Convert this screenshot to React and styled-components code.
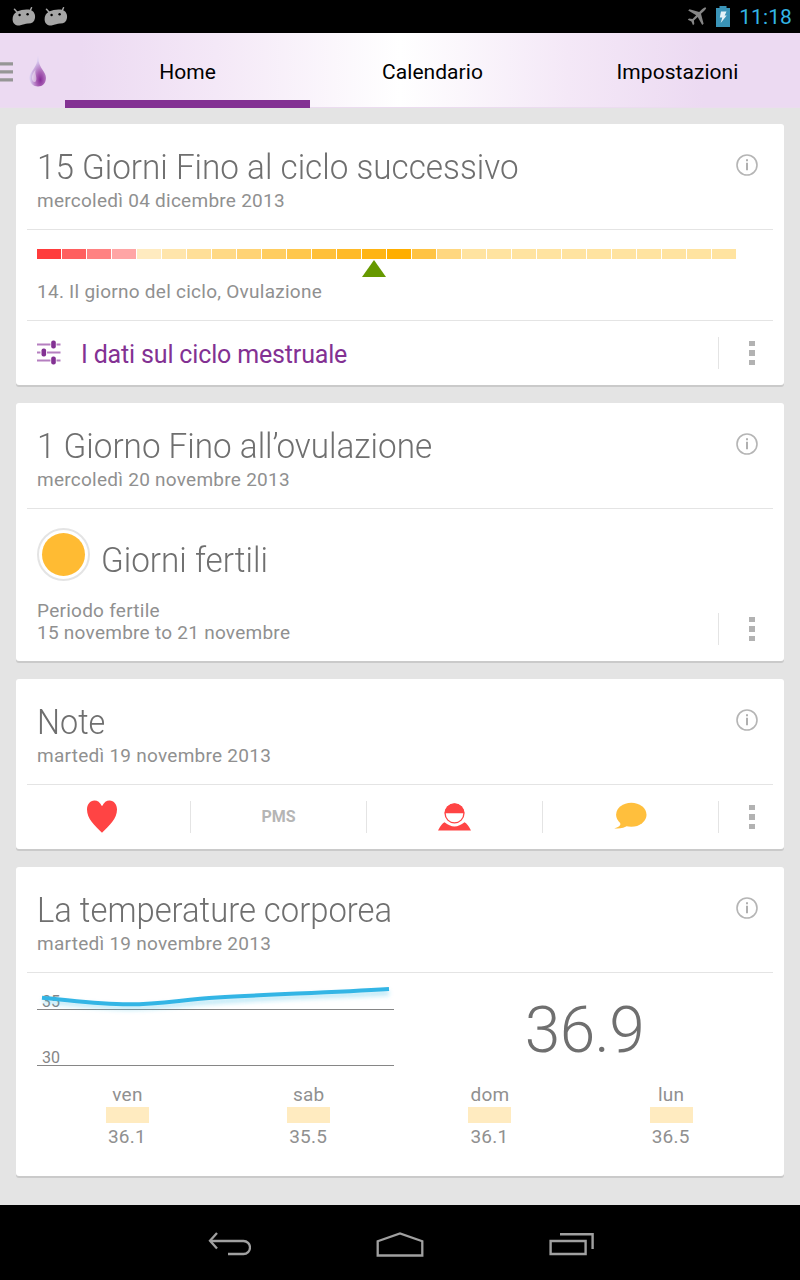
import React from "react";
import styled, { createGlobalStyle } from "styled-components";

const GlobalStyle = createGlobalStyle`
  body {
    margin: 0;
    background: #e4e4e4;
    font-family: Roboto, "Liberation Sans", sans-serif;
  }

  * {
    box-sizing: border-box;
  }

  svg {
    display: block;
    flex-shrink: 0;
  }
`;

const Screen = styled.div`
  width: 800px;
  height: 1280px;
  display: flex;
  flex-direction: column;
  overflow: hidden;
`;

/* System bars */

const StatusBar = styled.div`
  height: 33px;
  flex-shrink: 0;
  background: #000;
  display: flex;
  align-items: center;
  justify-content: space-between;
  padding: 0 8px 0 12px;
`;

const StatusGroup = styled.div`
  display: flex;
  align-items: center;
  gap: ${(props) => props.$gap}px;
`;

const Clock = styled.span`
  color: #33b5e5;
  font-size: 21px;
  line-height: 33px;
  padding-top: 2px;
  letter-spacing: 0.1px;
`;

const NavBar = styled.nav`
  height: 75px;
  flex-shrink: 0;
  background: #000;
  display: flex;
  justify-content: center;
  align-items: center;
  gap: 125px;
  padding: 3px 0 0 2px;
`;

/* Header */

const Header = styled.header`
  height: 75px;
  flex-shrink: 0;
  display: flex;
  background: linear-gradient(90deg, #ecdaf2 0%, #ecdaf2 10%, #f4e8f7 27%, #fff 50%, #f4e8f7 71%, #ecdaf2 88%, #ecdaf2 100%);
  box-shadow: inset 0 -1px #ecdcf0;
`;

const Brand = styled.div`
  width: 65px;
  display: flex;
  align-items: center;
  gap: 16px;
  padding-top: 2px;
`;

const Tab = styled.div`
  width: 245px;
  height: 75px;
  padding-top: 7px;
  border-bottom: 8px solid ${(props) => (props.$active ? "#833193" : "transparent")};
  text-align: center;
  font-size: 21px;
  line-height: 64px;
  letter-spacing: 0.05px;
  color: #000;
`;

/* Cards */

const Cards = styled.main`
  flex: 1;
  display: flex;
  flex-direction: column;
  gap: 18px;
  padding: 16px;
`;

const Card = styled.section`
  height: ${(props) => props.$height}px;
  flex-shrink: 0;
  padding: 0 11px;
  background: #fff;
  border-radius: 3px;
  box-shadow: 0 2px #cacaca;
`;

const CardHeader = styled.div`
  height: 106px;
  padding: 24px 15px 0 10px;
  display: flex;
  justify-content: space-between;
  border-bottom: 1px solid #e4e4e4;

  svg {
    margin-top: 6px;
  }
`;

/* slightly condensed light face */
const Title = styled.h2`
  margin: 0;
  font-size: 35px;
  font-weight: 300;
  line-height: 40px;
  color: #6f6f6f;
  white-space: nowrap;
  transform: scaleX(${(props) => props.$stretch || 0.95});
  transform-origin: left;
`;

const Text = styled.div`
  font-size: 19px;
  line-height: 22px;
  letter-spacing: 0.26px;
  color: #909090;
  white-space: nowrap;
`;

const Subtitle = styled(Text)`
  margin-top: 2px;
`;

const CycleBody = styled.div`
  height: 91px;
  padding: 19px 10px 0;
  border-bottom: 1px solid #e4e4e4;
`;

const CycleBar = styled.div`
  display: flex;
  gap: 1px;
`;

const CycleDay = styled.div`
  width: 24px;
  height: 10px;
  background: ${(props) => props.$color};
`;

const Marker = styled.div`
  width: 24px;
  height: 17px;
  margin: 1px 0 4px 325px;
  background: #669900;
  clip-path: polygon(50% 0, 100% 100%, 0 100%);
`;

const ActionRow = styled.div`
  height: 64px;
  display: flex;
  align-items: center;
`;

const Action = styled.div`
  flex: 1;
  display: flex;
  align-items: center;
  gap: 20px;
  padding: 2px 0 0 10px;
  font-size: 25px;
  letter-spacing: -0.16px;
  color: #833193;

  svg {
    margin-bottom: 4px;
  }
`;

const More = styled.div`
  width: 55px;
  height: 32px;
  flex-shrink: 0;
  display: flex;
  flex-direction: column;
  justify-content: center;
  gap: 4px;
  padding-left: 30px;
  border-left: 1px solid #e4e4e4;
`;

const Dot = styled.span`
  width: 5.5px;
  height: 5.5px;
  background: #b2b2b2;
`;

const FertileBody = styled.div`
  height: 152px;
  padding: 19px 0 0 10px;
`;

const FertileRow = styled.div`
  display: flex;
  gap: 11px;

  ${Title} {
    margin-top: 13px;
  }
`;

const Ring = styled.div`
  width: 53px;
  height: 53px;
  border: 2px solid #e4e4e4;
  border-radius: 50%;
  padding: 3px;

  &::after {
    content: "";
    display: block;
    width: 43px;
    height: 43px;
    border-radius: 50%;
    background: #ffbb33;
  }
`;

const FertileFooter = styled.div`
  display: flex;
  justify-content: space-between;
  align-items: flex-end;
  margin-top: 19px;

  ${More} {
    margin-bottom: -1px;
  }
`;

const NoteRow = styled.div`
  height: 64px;
  display: flex;
  align-items: center;
`;

const NoteCell = styled.div`
  width: ${(props) => (props.$first ? 163 : 176)}px;
  height: 32px;
  display: flex;
  align-items: center;
  justify-content: center;
  padding-right: ${(props) => (props.$first ? 14 : 0)}px;
  padding-bottom: ${(props) => props.$lift || 0}px;
  border-left: ${(props) => (props.$first ? "none" : "1px solid #e4e4e4")};
  font-size: 16px;
  font-weight: 700;
  color: #b5b5b5;
`;

const TemperatureRow = styled.div`
  display: flex;
  padding-left: 10px;
`;

const Chart = styled.svg`
  width: 357px;
  height: 110px;
`;

const Current = styled.div`
  width: 381px;
  flex-shrink: 0;
  padding-top: 20px;
  text-align: center;
  font-size: 64px;
  font-weight: 300;
  line-height: 76px;
  letter-spacing: -0.6px;
  color: #6f6f6f;
`;

const Days = styled.div`
  display: grid;
  grid-template-columns: repeat(4, 181.25px);
  padding-left: 9.8px;
`;

const Day = styled.div`
  display: flex;
  flex-direction: column;
  align-items: center;
`;

const DayName = styled(Text)`
  padding-top: 1px;
`;

const DayValue = styled(Text)`
  padding-right: 1px;
`;

const Swatch = styled.div`
  width: 43px;
  height: 16px;
  margin: 1px 0 3px;
  background: #ffebc0;
`;

/* Icons */

const Bean = () => (
  <svg width="24" height="20" viewBox="0 0 24 20" fill="#a6a6a6">
    <path d="M5.2 4.600C9 2.600 14.500 2 18.500 2.900C22 4 23.600 7.500 23 11C22.400 14.800 20 16.600 16 16.500C13 16.500 11.500 17.700 7.500 18.500C4 18.800 .8 17 .6 12.500C.5 9 2 6.300 5.200 4.600Z" />
    <path d="M5.200 5.200L2.500 2.300M18.200 3.600L19.500.8" stroke="#a6a6a6" strokeWidth="1.500" strokeLinecap="round" />
    <circle cx="7.600" cy="8" r="1.200" fill="#000" />
    <circle cx="15.600" cy="7.200" r="1.200" fill="#000" />
  </svg>
);

const Plane = () => (
  <svg width="20" height="19" viewBox="0 0 20 19" fill="#858585">
    <path d="M19 .7C18.400 0 16.500.8 15.300 2L12.200 5L2.500 2.300L1.200 3.600L9.200 8.200L5.500 12L2 11.500L.8 12.700L4.400 14.500L6 18.200L7.300 17L6.900 13.500L10.700 9.900L15.200 18L16.600 16.700L14 6.800L17.300 3.700C18.500 2.500 19.500 1.300 19 .7Z" />
  </svg>
);

const Battery = () => (
  <svg width="14" height="21" viewBox="0 0 14 21">
    <path d="M3.500 0H10.500V2H14V21H0V2H3.500Z" fill="#3a94b8" />
    <path d="M5 5.500H10.500L8.700 9.500H10.700L4.700 17L6.300 11.500H3.800Z" fill="#e3f2f8" />
  </svg>
);

const Menu = () => (
  <svg width="13" height="20" viewBox="0 0 13 20" fill="#969696">
    <path d="M0 .3H13V3.600H0ZM0 8.300H13V11.600H0ZM0 16.300H13V19.600H0Z" />
  </svg>
);

const Drop = () => (
  <svg width="18" height="34" viewBox="0 0 18 34">
    <defs>
      <radialGradient id="drop" cx="0.66" cy="0.78" r="0.62">
        <stop offset="0" stopColor="#862a98" />
        <stop offset="0.4" stopColor="#a962b5" />
        <stop offset="1" stopColor="#d9cdf0" />
      </radialGradient>
    </defs>
    <path d="M9 .5C9.500 7 10.500 10 13 14C15.500 17.500 17 20 17 23C17 28 13.500 31.500 9 31.500S.5 28 .5 23C.5 20 2 17.500 4.500 14C7.300 10 8.500 7 9 .5Z" fill="url(#drop)" />
    <path d="M6.500 14.500C3.500 18.500 2.500 21 3 24C3.500 27 6 28 7 26C8.500 22 5.500 19 6.500 14.500Z" fill="#fff" opacity="0.45" />
  </svg>
);

const Info = () => (
  <svg width="22" height="22" viewBox="0 0 22 22">
    <circle cx="11" cy="11" r="10" fill="none" stroke="#b5b5b5" strokeWidth="1.600" />
    <path d="M10 5.200H12V7.200H10ZM10 8.800H12V16.300H10Z" fill="#b0b0b0" />
  </svg>
);

const Sliders = () => (
  <svg width="24" height="25" viewBox="0 0 24 25">
    <path d="M0 4.500H23.500M0 12.500H23.500M0 20.500H23.500" stroke="#b57fc0" strokeWidth="2" />
    <path d="M13.500 4.500H19.500M3.500 12.500H10M13.500 20.500H19.500" stroke="#fff" strokeWidth="3" />
    <g fill="#833193">
      <rect x="14.200" y="0.500" width="4.600" height="8" rx="2" />
      <rect x="4.500" y="8.500" width="4.600" height="8" rx="2" />
      <rect x="14.200" y="16.500" width="4.600" height="8" rx="2" />
    </g>
  </svg>
);

const Heart = () => (
  <svg width="30" height="33" viewBox="0 0 30 33" fill="#ff4444">
    <path d="M15 6.300C13 2.200 10.500.5 7.500.5C3 .5 0 4.500 0 9.500C0 18.500 7.500 25.500 15 32.700C22.500 25.500 30 18.500 30 9.500C30 4.500 27 .5 22.500.5C19.500.5 17 2.200 15 6.300Z" />
  </svg>
);

const Person = () => (
  <svg width="33" height="28" viewBox="0 0 33 28">
    <circle cx="16.500" cy="10.500" r="9.400" fill="#fff" stroke="#ff4444" strokeWidth="1.300" />
    <path d="M6.500 10.300A10 10 0 0 1 26.500 10.300Z" fill="#ff4444" />
    <path d="M6.500 19.300Q16.500 27.600 26.500 19.300Q29.500 20.500 33 27.500H0Q3.500 20.500 6.500 19.300Z" fill="#ff4444" />
  </svg>
);

const Bubble = () => (
  <svg width="33" height="27" viewBox="0 0 33 27" fill="#ffbf3d">
    <ellipse cx="17.300" cy="12.700" rx="15.200" ry="12" />
    <path d="M4.500 19C8.500 22 6 25 .3 26.200C5 27 11 25.700 13.500 23.500Z" />
  </svg>
);

const Back = () => (
  <svg width="44" height="24" viewBox="0 0 44 24" fill="none" stroke="#a0a0a0" strokeWidth="2.300">
    <path d="M3 9H36.500A6.500 6.500 0 0 1 36.500 22H21" />
    <path d="M10 1L3 8.700L10 16.500" />
  </svg>
);

const Home = () => (
  <svg width="48" height="25" viewBox="0 0 48 25" fill="none" stroke="#a0a0a0" strokeWidth="2.300">
    <path d="M1.700 23.500V9.200L24 1.500L46.300 9.200V23.500Z" />
  </svg>
);

const Recents = () => (
  <svg width="46" height="24" viewBox="0 0 46 24" fill="none" stroke="#a0a0a0" strokeWidth="2.400">
    <path d="M1.600 9H36.600V22H1.600ZM11 2.300H43.600V17" />
  </svg>
);

const cycleColors = [
  "#ff3b3b", "#ff5f5f", "#ff8282", "#ffa5a5", "#ffebc0", "#ffe5ab", "#ffdf98",
  "#ffd985", "#ffd375", "#ffcd60", "#ffc74d", "#ffc03a", "#ffba28", "#ffb413",
  "#ffae00", "#ffc343", "#ffd780",
  ...Array(11).fill("#ffe3a0"),
];

const days = [
  { name: "ven", value: "36.1" },
  { name: "sab", value: "35.5" },
  { name: "dom", value: "36.1" },
  { name: "lun", value: "36.5" },
];

const MoreButton = () => (
  <More>
    <Dot />
    <Dot />
    <Dot />
  </More>
);

const CardTop = ({ title, date, stretch }) => (
  <CardHeader>
    <div>
      <Title $stretch={stretch}>{title}</Title>
      <Subtitle>{date}</Subtitle>
    </div>
    <Info />
  </CardHeader>
);

export default function App() {
  return (
    <Screen>
      <GlobalStyle />

      <StatusBar>
        <StatusGroup $gap={8}>
          <Bean />
          <Bean />
        </StatusGroup>
        <StatusGroup $gap={9}>
          <Plane />
          <Battery />
          <Clock>11:18</Clock>
        </StatusGroup>
      </StatusBar>

      <Header>
        <Brand>
          <Menu />
          <Drop />
        </Brand>
        <Tab $active>Home</Tab>
        <Tab>Calendario</Tab>
        <Tab>Impostazioni</Tab>
      </Header>

      <Cards>
        <Card $height={261}>
          <CardTop title="15 Giorni Fino al ciclo successivo" date="mercoledì 04 dicembre 2013" />
          <CycleBody>
            <CycleBar>
              {cycleColors.map((color, i) => (
                <CycleDay key={i} $color={color} />
              ))}
            </CycleBar>
            <Marker />
            <Text>14. Il giorno del ciclo, Ovulazione</Text>
          </CycleBody>
          <ActionRow>
            <Action>
              <Sliders />
              I dati sul ciclo mestruale
            </Action>
            <MoreButton />
          </ActionRow>
        </Card>

        <Card $height={258}>
          <CardTop title="1 Giorno Fino all’ovulazione" date="mercoledì 20 novembre 2013" />
          <FertileBody>
            <FertileRow>
              <Ring />
              <Title>Giorni fertili</Title>
            </FertileRow>
            <FertileFooter>
              <Text>
                Periodo fertile
                <br />
                15 novembre to 21 novembre
              </Text>
              <MoreButton />
            </FertileFooter>
          </FertileBody>
        </Card>

        <Card $height={170}>
          <CardTop title="Note" date="martedì 19 novembre 2013" stretch={0.925} />
          <NoteRow>
            <NoteCell $first $lift={2}><Heart /></NoteCell>
            <NoteCell $lift={2}>PMS</NoteCell>
            <NoteCell><Person /></NoteCell>
            <NoteCell $lift={3}><Bubble /></NoteCell>
            <MoreButton />
          </NoteRow>
        </Card>

        <Card $height={309}>
          <CardTop title="La temperature corporea" date="martedì 19 novembre 2013" stretch={0.937} />
          <TemperatureRow>
            <Chart viewBox="0 0 357 110">
              <defs>
                <filter id="glow" x="-5%" y="-80%" width="110%" height="300%">
                  <feGaussianBlur stdDeviation="2" />
                </filter>
              </defs>
              <path d="M0 36.500H357M0 92.500H357" stroke="#868686" />
              <g fill="#868686" fontSize="16">
                <text x="5" y="34">35</text>
                <text x="5" y="90">30</text>
              </g>
              <path d="M6 28C30 30 55 34 90 34.500C125 35 145 30 180 28.500C235 24.500 290 23 352 20" fill="none" stroke="#33b5e5" strokeOpacity="0.3" strokeWidth="5" filter="url(#glow)" />
              <path d="M5 24.800C40 28 60 31.300 92 31.300C125 31.300 145 26.500 180 24.500C235 21 290 20 352 16" fill="none" stroke="#33b5e5" strokeWidth="4" />
            </Chart>
            <Current>36.9</Current>
          </TemperatureRow>
          <Days>
            {days.map((day) => (
              <Day key={day.name}>
                <DayName>{day.name}</DayName>
                <Swatch />
                <DayValue>{day.value}</DayValue>
              </Day>
            ))}
          </Days>
        </Card>
      </Cards>

      <NavBar>
        <Back />
        <Home />
        <Recents />
      </NavBar>
    </Screen>
  );
}
